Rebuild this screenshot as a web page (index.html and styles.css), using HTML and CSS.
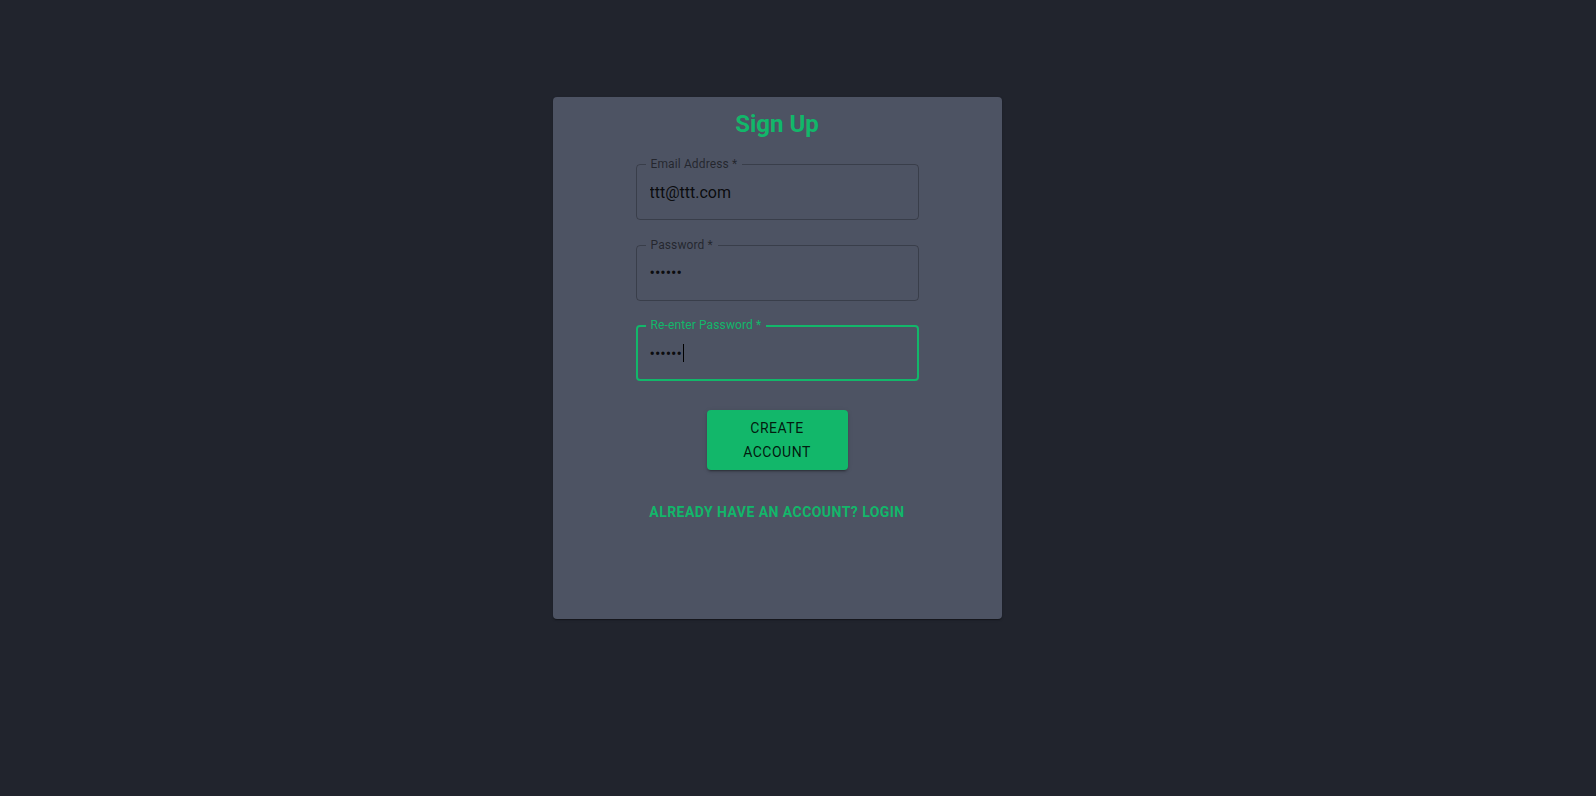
FILE: index.html
```html
<!DOCTYPE html>
<html>
<head>
    <title>Sign Up</title>
    <link rel="stylesheet" href="styles.css">
</head>
<body>
    <div class="page">
        <div class="card">
            <h2 class="title">Sign Up</h2>
            <form class="signup-form" onsubmit="return false">
                <div class="field">
                    <label class="field-label" for="email">Email Address *</label>
                    <input class="field-input" type="text" id="email" value="ttt@ttt.com">
                </div>
                <div class="field">
                    <label class="field-label" for="password">Password *</label>
                    <input class="field-input" type="password" id="password" value="123456">
                </div>
                <div class="field field-focused">
                    <label class="field-label" for="password2">Re-enter Password *</label>
                    <input class="field-input" type="password" id="password2" value="123456">
                    <span class="caret"></span>
                </div>
                <button class="btn-create" type="submit">Create Account</button>
                <a class="btn-link" href="#">Already have an account? Login</a>
            </form>
        </div>
    </div>
</body>
</html>
```

FILE: styles.css
```css
body {
    margin: 0;
    background-color: #21242d;
    font-family: Roboto, "Liberation Sans", Arial, sans-serif;
    height: 100vh;
}
.page {
    display: flex;
    justify-content: center;
    padding: 97px 42px 0 0;
}
.card {
    width: 449px;
    height: 522px;
    box-sizing: border-box;
    padding-top: 11px;
    background-color: #4d5363;
    border-radius: 4px;
    box-shadow: 0px 2px 1px -1px rgba(0, 0, 0, 0.2), 0px 1px 1px 0px rgba(0, 0, 0, 0.14), 0px 1px 3px 0px rgba(0, 0, 0, 0.12);
    display: flex;
    flex-direction: column;
    align-items: center;
}
.title {
    margin: 0 0 7.5px;
    font-size: 24px;
    line-height: 32px;
    font-weight: 700;
    color: #12b76a;
}
.signup-form {
    width: 283px;
    display: flex;
    flex-direction: column;
    align-items: center;
}
.field {
    position: relative;
    width: 100%;
    height: 56px;
    box-sizing: border-box;
    margin: 16.5px 0 8px;
    border: 1px solid rgba(0, 0, 0, 0.25);
    border-radius: 4px;
}
.field-label {
    position: absolute;
    top: -8px;
    left: 9px;
    padding: 0 5px;
    font-size: 12px;
    line-height: 14px;
    color: rgba(0, 0, 0, 0.55);
    background-color: #4d5363;
    letter-spacing: 0.01em;
}
.field-input {
    width: 100%;
    height: 100%;
    box-sizing: border-box;
    padding: 0 13px;
    border: none;
    outline: none;
    background: transparent;
    font-family: inherit;
    font-size: 16px;
    color: rgba(0, 0, 0, 0.87);
}
.field-focused {
    border: 2px solid #12b76a;
}
.field-focused .field-label {
    top: -9px;
    left: 8px;
    color: #12b76a;
}
.field-focused .field-input {
    padding: 0 12px;
}
.caret {
    position: absolute;
    left: 45px;
    top: 17px;
    width: 1px;
    height: 18px;
    background-color: #000;
}
.btn-create {
    width: 141px;
    margin-top: 21px;
    padding: 6px 16px;
    border: none;
    border-radius: 4px;
    background-color: #12b76a;
    color: rgba(0, 0, 0, 0.87);
    font-family: inherit;
    font-size: 14px;
    font-weight: 400;
    line-height: 24px;
    letter-spacing: 0.5px;
    text-transform: uppercase;
    cursor: pointer;
    box-shadow: 0px 3px 1px -2px rgba(0, 0, 0, 0.2), 0px 2px 2px 0px rgba(0, 0, 0, 0.14), 0px 1px 5px 0px rgba(0, 0, 0, 0.12);
}
.btn-link {
    margin-top: 24px;
    padding: 6px 8px;
    font-size: 14px;
    font-weight: 700;
    line-height: 24px;
    letter-spacing: 0.45px;
    text-transform: uppercase;
    text-decoration: none;
    color: #12b76a;
    white-space: nowrap;
}
```
